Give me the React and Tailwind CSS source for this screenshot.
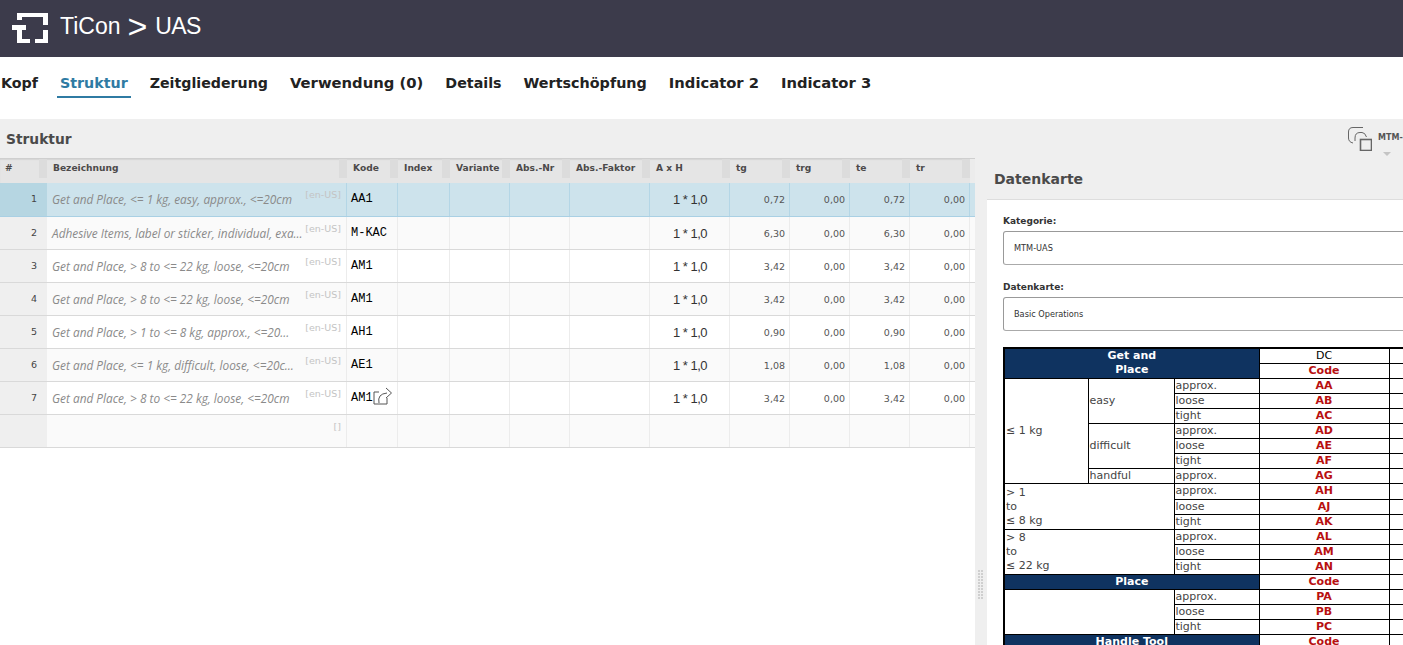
const columns = [
  { label: "#", w: "w-[47px]" },
  { label: "Bezeichnung", w: "w-[300px]" },
  { label: "Kode", w: "w-[51px]" },
  { label: "Index", w: "w-[52px]" },
  { label: "Variante", w: "w-[60px]" },
  { label: "Abs.-Nr", w: "w-[60px]" },
  { label: "Abs.-Faktor", w: "w-[80px]" },
  { label: "A x H", w: "w-[80px]" },
  { label: "tg", w: "w-[60px]" },
  { label: "trg", w: "w-[60px]" },
  { label: "te", w: "w-[60px]" },
  { label: "tr", w: "w-[60px]" },
];

const rows = [
  { text: "Get and Place, <= 1 kg, easy, approx., <=20cm", code: "AA1", tg: "0,72" },
  { text: "Adhesive Items, label or sticker, individual, exa...", code: "M-KAC", tg: "6,30" },
  { text: "Get and Place, > 8 to <= 22 kg, loose, <=20cm", code: "AM1", tg: "3,42" },
  { text: "Get and Place, > 8 to <= 22 kg, loose, <=20cm", code: "AM1", tg: "3,42" },
  { text: "Get and Place, > 1 to <= 8 kg, approx., <=20...", code: "AH1", tg: "0,90" },
  { text: "Get and Place, <= 1 kg, difficult, loose, <=20c...", code: "AE1", tg: "1,08" },
  { text: "Get and Place, > 8 to <= 22 kg, loose, <=20cm", code: "AM1", tg: "3,42", link: true },
];

const tabs = [
  { label: "Kopf", size: "text-[14.25px]" },
  { label: "Struktur", size: "text-[14.25px]" },
  { label: "Zeitgliederung", size: "text-[14.2px]" },
  { label: "Verwendung (0)", size: "text-[14.8px]" },
  { label: "Details", size: "text-[14.25px]" },
  { label: "Wertschöpfung", size: "text-[14.35px]" },
  { label: "Indicator 2", size: "text-[14.75px]" },
  { label: "Indicator 3", size: "text-[14.75px]" },
];

function Logo() {
  return (
    <svg width="36" height="30" viewBox="0 0 36 30" fill="#fff" className="shrink-0">
      <path d="M5 0H36V12H31V4H10V7H5Z" />
      <path d="M0 12H14V17H10V26H18V30H5V17H0Z" />
      <path d="M23 26H31V17H36V30H23Z" />
    </svg>
  );
}

function CopyIcon() {
  return (
    <svg width="24" height="24" viewBox="0 0 24 24" fill="none" stroke="#666" strokeWidth="1" className="shrink-0">
      <path d="M15 0.5H5Q0.5 0.5 0.5 5V11Q0.5 15 5 16" />
      <path d="M7 14V11Q7 5.5 12 5.5H14Q17 5.5 18.5 10" />
      <rect x="12.5" y="12.5" width="11" height="11" strokeWidth="1.6" />
    </svg>
  );
}

function ShareIcon() {
  return (
    <svg width="20" height="18" viewBox="0 0 20 18" fill="none" stroke="#555" strokeWidth="1" className="shrink-0">
      <path d="M6 5H1V17H14V11" />
      <path d="M6 16Q4 7 14 6" />
      <path d="M13 1L18.5 6L13 11" />
    </svg>
  );
}

function GridHeader() {
  return (
    <div className="flex h-[25px] bg-[#e5e5e5] border-t border-[#cfcfcf] shadow-[inset_0_1px_1px_#d5d5d5]">
      {columns.map((col, i) => (
        <div key={col.label} className={`${col.w} shrink-0 relative pt-[3px] text-[9.1px] font-bold text-[#4c4a4a] ${i === 0 ? "pl-[5px]" : "pl-[6px]"}`}>
          {col.label}
          <span className="absolute right-0 top-0 h-[19px] w-[8px] bg-[#dcdcdc]" />
        </div>
      ))}
      <div className="w-[5px] shrink-0 bg-[#ececec]" />
    </div>
  );
}

function GridRow({ row, index }) {
  const selected = index === 0;
  const line = selected ? "border-[#b4d6e6]" : "border-[#ececec]";
  const bg = selected ? "bg-[#cde3ec]" : index % 2 === 1 ? "bg-[#fafafa]" : "bg-white";
  const cell = `shrink-0 border-r ${line}`;
  return (
    <div className={`flex border-b ${selected ? "h-[34px] border-b-[#a9d0e4]" : "h-[33px] border-b-[#d9d9d9]"} ${bg}`}>
      <div className={`w-[47px] shrink-0 pr-[10px] pt-[9px] text-right text-[9.5px] text-[#444] ${selected ? "bg-[#b6d6e2]" : "bg-[#efefef]"}`}>
        {index + 1}
      </div>
      <div className={`w-[300px] ${cell} relative pl-[5px] pt-[8px] text-[11.85px] italic text-[#8a8a8a] font-['Open_Sans',sans-serif] whitespace-nowrap overflow-hidden`}>
        {row.text}
        <span className="absolute right-[5px] top-[5px] text-[9.5px] not-italic text-[#c4c4c4] font-['DejaVu_Sans',sans-serif]">[en-US]</span>
      </div>
      <div className={`w-[51px] ${cell} flex items-start pl-[4px] pt-[7px] text-[12px] text-black font-['Liberation_Mono',monospace] whitespace-nowrap`}>
        {row.code}
        {row.link && <span className="-mt-[2px]"><ShareIcon /></span>}
      </div>
      <div className={`w-[52px] ${cell}`} />
      <div className={`w-[60px] ${cell}`} />
      <div className={`w-[60px] ${cell}`} />
      <div className={`w-[80px] ${cell}`} />
      <div className={`w-[80px] ${cell} pt-[7px] pr-[22px] text-right text-[13px] tracking-[-0.5px] text-[#333] font-['Liberation_Sans',sans-serif]`}>1 * 1,0</div>
      <div className={`w-[60px] ${cell} pt-[10px] pr-[4px] text-right text-[9.5px] text-[#555]`}>{row.tg}</div>
      <div className={`w-[60px] ${cell} pt-[10px] pr-[4px] text-right text-[9.5px] text-[#555]`}>0,00</div>
      <div className={`w-[60px] ${cell} pt-[10px] pr-[4px] text-right text-[9.5px] text-[#555]`}>{row.tg}</div>
      <div className={`w-[60px] ${cell} pt-[10px] pr-[4px] text-right text-[9.5px] text-[#555]`}>0,00</div>
    </div>
  );
}

function EmptyRow() {
  const cell = "shrink-0 border-r border-[#ececec]";
  return (
    <div className="flex h-[33px] border-b border-b-[#d9d9d9] bg-[#fafafa]">
      <div className="w-[47px] shrink-0 bg-[#efefef]" />
      <div className={`w-[300px] ${cell} pt-[5px] pr-[5px] text-right text-[9.5px] text-[#c4c4c4]`}>[]</div>
      {["w-[51px]", "w-[52px]", "w-[60px]", "w-[60px]", "w-[80px]", "w-[80px]", "w-[60px]", "w-[60px]", "w-[60px]", "w-[60px]"].map((w, i) => (
        <div key={i} className={`${w} ${cell}`} />
      ))}
    </div>
  );
}

const td = "border border-black p-0 pl-[1px] text-left align-middle leading-[14px] text-[#444]";
const codeTd = "border border-black p-0 text-center font-bold text-[#b81010] leading-[14px]";
const headTd = "border border-black p-0 bg-[#0f3360] text-center font-bold text-white leading-[14px]";

function Variant({ first, label, code, tall }) {
  return (
    <tr className={tall ? "h-[16px]" : "h-[15px]"}>
      {first}
      <td className={`${td} ${tall ? "pb-[1px]" : ""}`}>{label}</td>
      <td className={`${codeTd} ${tall ? "pb-[1px]" : ""}`}>{code}</td>
      <td className={td} />
    </tr>
  );
}

function DataTable() {
  return (
    <table className="mt-[16px] ml-[16px] w-[600px] table-fixed border-collapse border-2 border-black text-[11px]">
      <colgroup>
        <col className="w-[84px]" />
        <col className="w-[86px]" />
        <col className="w-[85px]" />
        <col className="w-[130px]" />
        <col className="w-[215px]" />
      </colgroup>
      <tbody>
        <tr className="h-[15px]">
          <td colSpan={3} rowSpan={2} className={`${headTd} align-top`}>Get and<br />Place</td>
          <td className="border border-black p-0 text-center text-black leading-[14px]">DC</td>
          <td className={td} />
        </tr>
        <tr className="h-[15px]">
          <td className={codeTd}>Code</td>
          <td className={td} />
        </tr>
        <Variant first={<><td rowSpan={7} className={td}>≤ 1 kg</td><td rowSpan={3} className={td}>easy</td></>} label="approx." code="AA" />
        <Variant label="loose" code="AB" />
        <Variant label="tight" code="AC" />
        <Variant first={<td rowSpan={3} className={td}>difficult</td>} label="approx." code="AD" />
        <Variant label="loose" code="AE" />
        <Variant label="tight" code="AF" />
        <Variant first={<td className={td}>handful</td>} label="approx." code="AG" />
        <Variant tall first={<td rowSpan={3} colSpan={2} className={td}>&gt; 1<br />to<br />≤ 8 kg</td>} label="approx." code="AH" />
        <Variant label="loose" code="AJ" />
        <Variant label="tight" code="AK" />
        <Variant first={<td rowSpan={3} colSpan={2} className={td}>&gt; 8<br />to<br />≤ 22 kg</td>} label="approx." code="AL" />
        <Variant label="loose" code="AM" />
        <Variant label="tight" code="AN" />
        <tr className="h-[15px]">
          <td colSpan={3} className={headTd}>Place</td>
          <td className={codeTd}>Code</td>
          <td className={td} />
        </tr>
        <Variant first={<td rowSpan={3} colSpan={2} className={td} />} label="approx." code="PA" />
        <Variant label="loose" code="PB" />
        <Variant label="tight" code="PC" />
        <tr className="h-[15px]">
          <td colSpan={3} className={headTd}>Handle Tool</td>
          <td className={codeTd}>Code</td>
          <td className={td} />
        </tr>
      </tbody>
    </table>
  );
}

function Field({ label, value }) {
  return (
    <div className="mb-[15px] pl-[16px]">
      <div className="mb-[2px] h-[15px] text-[9px] font-bold leading-[15px] text-[#333]">{label}</div>
      <div className="h-[34px] w-[420px] rounded-[3px] border border-[#999] border-b-[#aaa] pl-[10px] text-[8.2px] leading-[33px] text-[#333]">
        {value}
      </div>
    </div>
  );
}

export default function App() {
  return (
    <div className="h-[645px] w-[1403px] overflow-hidden bg-white font-['DejaVu_Sans',sans-serif]">
      <header className="flex h-[57px] items-center gap-[12px] bg-[#3c3b4b] pl-[12px]">
        <div className="-mt-[2px]">
          <Logo />
        </div>
        <div className="-mt-[5px] flex items-center text-[23px] text-white font-['Liberation_Sans',sans-serif]">
          <span>TiCon</span>
          <span className="ml-[7px] text-[34px] leading-none">&gt;</span>
          <span className="ml-[8px] tracking-[-0.7px]">UAS</span>
        </div>
      </header>

      <nav className="flex h-[62px] items-baseline gap-[22px] pl-[1px] pt-[15px] font-bold text-[#222]">
        {tabs.map((tab) => (
          <div
            key={tab.label}
            className={`${tab.size} ${tab.label === "Struktur" ? "-mx-[3px] border-b-2 border-[#2f7ba3] px-[3px] pb-[2px] text-[#2f7ba3]" : ""}`}
          >
            {tab.label}
          </div>
        ))}
      </nav>

      <div className="flex h-[39px] items-start justify-between bg-[#efefef] pl-[6px]">
        <h2 className="pt-[10px] text-[13.8px] font-bold text-[#4a4a4a]">Struktur</h2>
        <div className="flex w-[55px] shrink-0 gap-[6px] overflow-hidden pt-[8px]">
          <CopyIcon />
          <div className="flex flex-col items-start whitespace-nowrap pt-[5px]">
            <span className="text-[8px] font-bold text-[#555]">MTM-UAS</span>
            <span className="ml-[5px] mt-[8px] h-0 w-0 border-x-[4px] border-t-[4px] border-x-transparent border-t-[#c4c4c4]" />
          </div>
        </div>
      </div>

      <div className="flex h-[487px]">
        <div className="w-[975px] shrink-0">
          <GridHeader />
          {rows.map((row, i) => (
            <GridRow key={i} row={row} index={i} />
          ))}
          <EmptyRow />
        </div>

        <aside className="relative flex min-w-0 flex-1 flex-col bg-[#efefef]">
          <div className="h-[41px] shrink-0 pl-[19px] pt-[11px] text-[14px] font-bold text-[#4a4a4a]">Datenkarte</div>
          <div className="ml-[12px] flex-1 overflow-hidden border-t border-[#ddd] bg-white pt-[14px]">
            <Field label="Kategorie:" value="MTM-UAS" />
            <Field label="Datenkarte:" value="Basic Operations" />
            <DataTable />
          </div>
          <div className="absolute left-[3px] top-[412px] grid grid-cols-2 gap-[1px]">
            {Array.from({ length: 20 }).map((_, i) => (
              <span key={i} className="h-[2px] w-[2px] bg-[#cfcfcf]" />
            ))}
          </div>
        </aside>
      </div>
    </div>
  );
}
